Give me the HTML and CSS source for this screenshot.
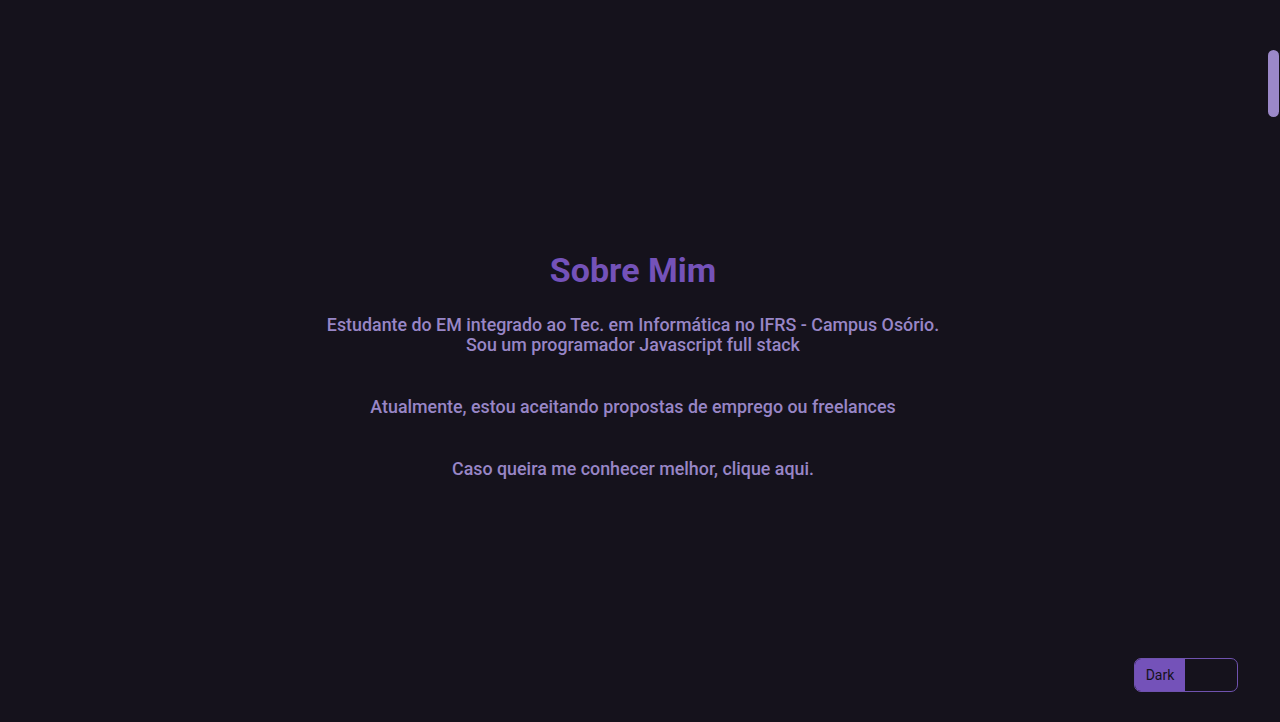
FILE: index.html
```html
<!DOCTYPE html>
<html lang="pt-BR">
<head>
<meta charset="utf-8">
<title>Sobre Mim</title>
<link rel="stylesheet" href="styles.css">
</head>
<body>
<main class="page">
  <section class="about">
    <h1 class="title">Sobre Mim</h1>
    <p class="text">Estudante do EM integrado ao Tec. em Informática no IFRS - Campus Osório.<br>Sou um programador Javascript full stack</p>
    <p class="text">Atualmente, estou aceitando propostas de emprego ou freelances</p>
    <p class="text">Caso queira me conhecer melhor, clique aqui.</p>
  </section>
</main>
<div class="scroll-thumb"></div>
<div class="theme-toggle">
  <span class="toggle-on">Dark</span>
  <span class="toggle-off"></span>
</div>
</body>
</html>
```
FILE: styles.css
```css
html, body {
  margin: 0;
  padding: 0;
  height: 100%;
  background: #15121c;
  overflow: hidden;
}
body {
  font-family: Roboto, "Liberation Sans", sans-serif;
}
.page {
  width: calc(100% - 14px);
  height: 100%;
  display: flex;
  align-items: center;
  justify-content: center;
}
.about {
  display: flex;
  flex-direction: column;
  align-items: center;
  text-align: center;
  margin-top: 6px;
}
.title {
  margin: 0 0 25px;
  font-size: 34px;
  font-weight: 700;
  color: #7452b9;
  line-height: 40px;
}
.text {
  margin: 0 0 42px;
  font-size: 17.85px;
  line-height: 20px;
  font-weight: 500;
  color: #9886c6;
}
.text:last-child { margin-bottom: 0; }
.scroll-thumb {
  position: fixed;
  top: 50px;
  right: 1px;
  width: 11px;
  height: 67px;
  border-radius: 6px;
  background: #9b88c8;
}
.theme-toggle {
  position: fixed;
  left: 1134px;
  top: 658px;
  width: 104px;
  height: 34px;
  box-sizing: border-box;
  border: 1px solid #6f52ae;
  border-radius: 7px;
  display: flex;
  overflow: hidden;
}
.toggle-on {
  width: 50px;
  background: #7452b9;
  color: #15121c;
  font-size: 14px;
  display: flex;
  align-items: center;
  justify-content: center;
}
.toggle-off { flex: 1; }
```
